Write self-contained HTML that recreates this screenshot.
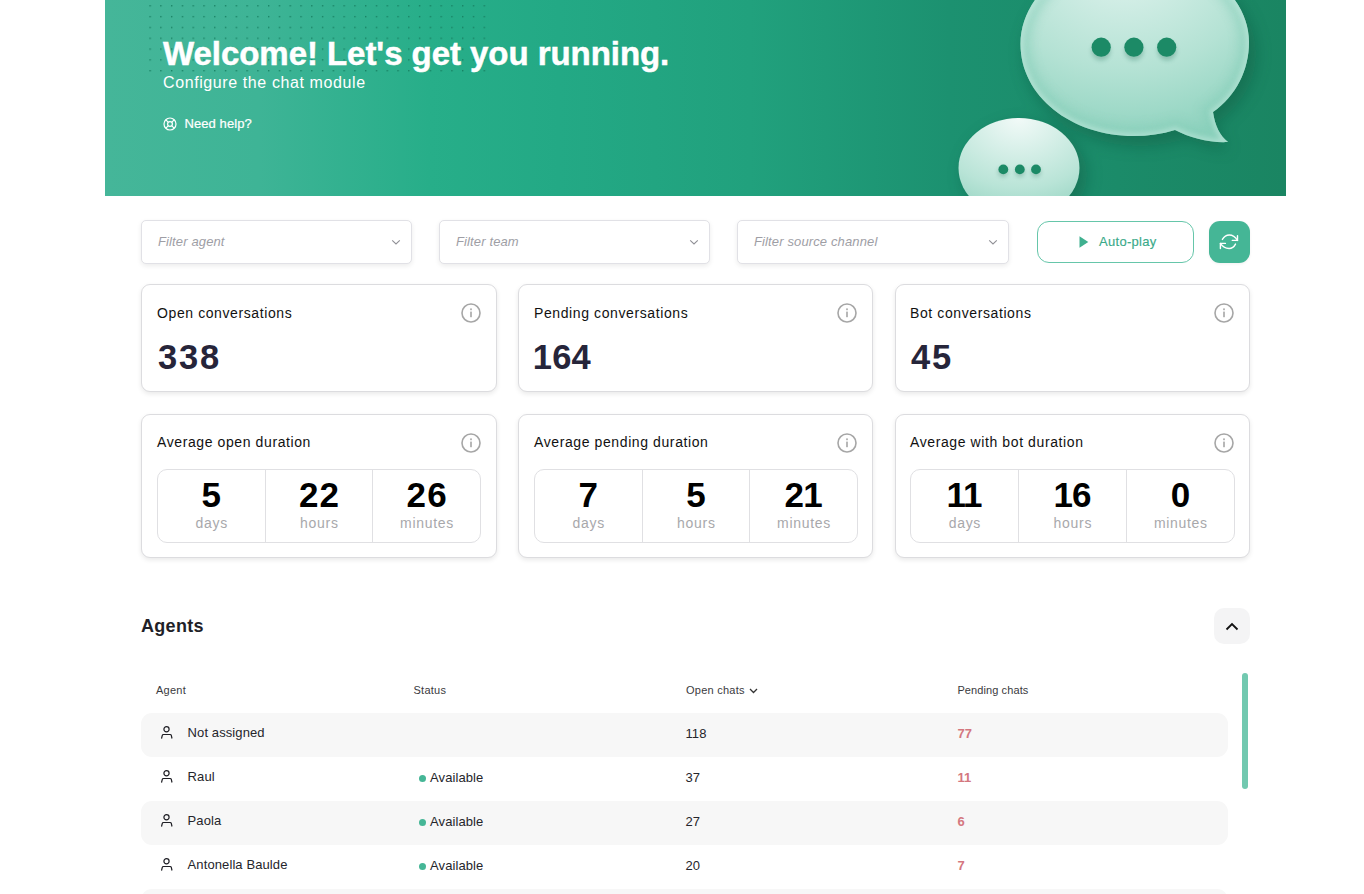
<!DOCTYPE html>
<html><head><meta charset="utf-8">
<style>
*{box-sizing:border-box;margin:0;padding:0}
html,body{width:1364px;height:894px;overflow:hidden;background:#fff;font-family:"Liberation Sans",sans-serif;color:#1f1f24}
.abs{position:absolute}
#banner{position:absolute;left:105px;top:0;width:1181px;height:196px;overflow:hidden;
 background:linear-gradient(90deg,#45b699 0%,#3eb496 13%,#27ae89 27.5%,#23a985 38.5%,#21a17d 54.6%,#1c9170 71.5%,#1a8562 100%)}
#dots{position:absolute;left:0;top:0}
.h1{position:absolute;left:163px;top:35px;font-size:33px;font-weight:bold;color:#fff;letter-spacing:-0.05px;-webkit-text-stroke:0.5px #fff;white-space:nowrap}
.sub{position:absolute;left:163px;top:74px;font-size:16px;color:#fff;letter-spacing:0.6px;white-space:nowrap}
.help{position:absolute;left:184.4px;top:116px;font-size:13px;color:#fff;white-space:nowrap;letter-spacing:0.1px;-webkit-text-stroke:0.2px #fff}
.filter{position:absolute;top:220px;height:44px;border:1px solid #e1e1e6;border-radius:5px;background:#fff;box-shadow:0 2px 5px rgba(0,0,0,.08)}
.filter span{position:absolute;left:16px;top:13px;font-size:13px;font-style:italic;color:#9e9ea5;letter-spacing:0.13px}
.filter svg{position:absolute;right:10px;top:18px}
.card{position:absolute;border:1px solid #dcdcdf;border-radius:9px;background:#fff;box-shadow:0 2px 5px rgba(0,0,0,.09)}
.card .t{position:absolute;top:20px;font-size:14px;color:#111;white-space:nowrap;letter-spacing:0.6px}
.card.r2 .t{top:19px}
.card .n{position:absolute;top:53px;font-size:34.5px;font-weight:bold;color:#26253a;letter-spacing:1.8px}
.card svg.info{position:absolute;right:15px;top:18px}
.dur{position:absolute;top:54px;height:74px;border:1px solid #e0e0e3;border-radius:10px;display:flex}
.dur div{flex:1;position:relative;text-align:center}
.dur div+div{border-left:1px solid #e0e0e3}
.dur b{position:absolute;left:0;right:0;top:5px;font-size:35px;color:#000;letter-spacing:1.2px;text-indent:1.2px}
.dur i{position:absolute;left:0;right:0;top:45px;font-style:normal;font-size:14px;color:#a8a8ab;letter-spacing:0.7px;text-indent:0.7px}
.th{position:absolute;top:683.7px;font-size:11px;color:#3a3a40;white-space:nowrap;letter-spacing:0.25px}
.row{position:absolute;left:141px;width:1087px;height:44px;border-radius:11px}
.cell{position:absolute;top:12px;font-size:13px;color:#25252b;white-space:nowrap;letter-spacing:0.1px}
.pend{font-weight:bold;color:#d4777f}
.dot{position:absolute;top:18px;width:7px;height:7px;border-radius:50%;background:#45b696}
</style></head><body>
<div id="banner"><svg id="dots" width="400" height="80" viewBox="0 0 400 80"><defs><pattern id="dp" x="44.4" y="5.1" width="10.78" height="10.82" patternUnits="userSpaceOnUse"><rect width="1.4" height="1.4" fill="#157e5f" opacity="0.9"/></pattern></defs><rect x="44" y="5" width="345" height="72" fill="url(#dp)"/></svg><svg class="abs" style="left:0;top:0" width="1181" height="196" viewBox="105 0 1181 196">
<defs>
<radialGradient id="g1" cx="0.45" cy="0.05" r="0.95"><stop offset="0" stop-color="#e0f3ee"/><stop offset="0.6" stop-color="#b4e2d4"/><stop offset="1" stop-color="#8fd3bf"/></radialGradient>
<radialGradient id="g2" cx="0.5" cy="0.0" r="1"><stop offset="0" stop-color="#f2faf8"/><stop offset="0.7" stop-color="#b9e4d7"/><stop offset="1" stop-color="#98d5c3"/></radialGradient>
<filter id="sh" x="-30%" y="-30%" width="160%" height="160%"><feGaussianBlur stdDeviation="8"/></filter>
<filter id="sh2" x="-50%" y="-50%" width="200%" height="200%"><feGaussianBlur stdDeviation="2"/></filter><filter id="bl5" x="-20%" y="-20%" width="140%" height="140%"><feGaussianBlur stdDeviation="5"/></filter><filter id="bl2" x="-20%" y="-20%" width="140%" height="140%"><feGaussianBlur stdDeviation="2.5"/></filter>
</defs>
<g opacity="0.35" filter="url(#sh)"><ellipse cx="1140" cy="54" rx="116" ry="92" fill="#0b4a36"/><path d="M1175 132 Q1200 146 1230 150 Q1212 130 1215 112Z" fill="#0b4a36"/><ellipse cx="1025" cy="175" rx="62" ry="52" fill="#0b4a36"/></g>
<clipPath id="cb"><path d="M1134.5 -47 C1198 -47 1249 -5 1249 42 C1249 70 1236 96 1213 112 C1215 126 1220 136 1228 142 C1210 143 1190 138 1175 130 C1162 134 1148 136 1134 136 C1071 136 1020.5 96 1020.5 44 C1020.5 -5 1071 -47 1134.5 -47Z"/></clipPath><clipPath id="cs"><ellipse cx="1019" cy="168" rx="60.5" ry="50"/></clipPath>
<path d="M1134.5 -47 C1198 -47 1249 -5 1249 42 C1249 70 1236 96 1213 112 C1215 126 1220 136 1228 142 C1210 143 1190 138 1175 130 C1162 134 1148 136 1134 136 C1071 136 1020.5 96 1020.5 44 C1020.5 -5 1071 -47 1134.5 -47Z" fill="url(#g1)"/>
<g clip-path="url(#cb)"><path d="M1134.5 -47 C1198 -47 1249 -5 1249 42 C1249 70 1236 96 1213 112 C1215 126 1220 136 1228 142 C1210 143 1190 138 1175 130 C1162 134 1148 136 1134 136 C1071 136 1020.5 96 1020.5 44 C1020.5 -5 1071 -47 1134.5 -47Z" fill="none" stroke="#84cdb7" stroke-width="22" opacity="0.45" filter="url(#bl5)"/><path d="M1134.5 -47 C1198 -47 1249 -5 1249 42 C1249 70 1236 96 1213 112 C1215 126 1220 136 1228 142 C1210 143 1190 138 1175 130 C1162 134 1148 136 1134 136 C1071 136 1020.5 96 1020.5 44 C1020.5 -5 1071 -47 1134.5 -47Z" fill="none" stroke="#cdeee4" stroke-width="6" opacity="0.5" filter="url(#bl2)"/></g>
<ellipse cx="1019" cy="168" rx="60.5" ry="50" fill="url(#g2)"/>
<g fill="#0f5a43" opacity="0.25" filter="url(#sh2)"><circle cx="1101" cy="51" r="9.6"/><circle cx="1134" cy="51" r="9.6"/><circle cx="1167" cy="51" r="9.6"/><circle cx="1003" cy="172" r="4.9"/><circle cx="1020" cy="172" r="4.9"/><circle cx="1036" cy="172" r="4.9"/></g>
<g fill="#1c8a66"><circle cx="1101.2" cy="47.2" r="9.6"/><circle cx="1133.9" cy="47.2" r="9.6"/><circle cx="1166.7" cy="47.2" r="9.6"/><circle cx="1003.3" cy="169.4" r="4.9"/><circle cx="1019.8" cy="169.4" r="4.9"/><circle cx="1036" cy="169.4" r="4.9"/></g>
</svg></div>
<div class="h1">Welcome! Let's get you running.</div>
<div class="sub">Configure the chat module</div>
<svg class="abs" style="left:163.4px;top:117.4px" width="14" height="14" viewBox="0 0 14 14"><g fill="none" stroke="#fff" stroke-width="1.2"><circle cx="7" cy="7" r="6"/><circle cx="7" cy="7" r="2.4"/><path d="M2.8 2.8 L5.2 5.2 M11.2 2.8 L8.8 5.2 M2.8 11.2 L5.2 8.8 M11.2 11.2 L8.8 8.8"/></g></svg>
<div class="help">Need help?</div>
<div class="filter" style="left:141px;width:271px"><span>Filter agent</span><svg width="10" height="6" viewBox="0 0 10 6"><path d="M1.2 1.3 L5 4.9 L8.8 1.3" fill="none" stroke="#909096" stroke-width="1.1"/></svg></div>
<div class="filter" style="left:439px;width:271px"><span>Filter team</span><svg width="10" height="6" viewBox="0 0 10 6"><path d="M1.2 1.3 L5 4.9 L8.8 1.3" fill="none" stroke="#909096" stroke-width="1.1"/></svg></div>
<div class="filter" style="left:737px;width:272px"><span>Filter source channel</span><svg width="10" height="6" viewBox="0 0 10 6"><path d="M1.2 1.3 L5 4.9 L8.8 1.3" fill="none" stroke="#909096" stroke-width="1.1"/></svg></div>
<div class="abs" style="left:1037px;top:221px;width:157px;height:42px;border:1px solid #66c6aa;border-radius:12px;"><svg class="abs" style="left:41px;top:14px" width="11" height="13" viewBox="0 0 11 13"><path d="M0.5 0.3 L9.3 6 L0.5 11.7Z" fill="#3fb08f"/></svg><span class="abs" style="left:61px;top:12px;font-size:13px;color:#3aaa89;letter-spacing:0.3px;-webkit-text-stroke:0.15px #3aaa89">Auto-play</span></div>
<div class="abs" style="left:1209px;top:221px;width:41px;height:42px;background:#45b696;border-radius:11px;box-shadow:0 1px 3px rgba(0,0,0,.06);"><svg class="abs" style="left:10px;top:11px" width="21" height="20" viewBox="0 0 21 20"><g fill="none" stroke="#fff" stroke-width="1.4" stroke-linecap="round" stroke-linejoin="round"><path d="M3.4 7.4 C5.5 3.8 8 3 10.3 3 C13.8 3 16.5 5.2 18.5 8.4"/><path d="M18.5 3.7 V8.4 H13.3"/><path d="M16.5 12.1 C15 15 12.8 16.5 10.1 16.5 C6.4 16.5 3.2 14.3 1.4 11.4"/><path d="M6.4 11.4 H1.4 V16.5"/></g></svg></div>
<div class="card" style="left:141px;top:284px;width:356px;height:108px"><div class="t" style="left:15px">Open conversations</div><div class="n" style="left:16px;">338</div><svg class="info" width="20" height="20" viewBox="0 0 20 20"><circle cx="10" cy="10" r="9" fill="none" stroke="#a6a6a6" stroke-width="1.6"/><rect x="9.2" y="8.6" width="1.6" height="5.6" fill="#a6a6a6"/><rect x="9.2" y="5.4" width="1.6" height="1.8" fill="#a6a6a6"/></svg></div>
<div class="card" style="left:518px;top:284px;width:355px;height:108px"><div class="t" style="left:15px">Pending conversations</div><div class="n" style="left:13.8px;letter-spacing:0.2px;">164</div><svg class="info" width="20" height="20" viewBox="0 0 20 20"><circle cx="10" cy="10" r="9" fill="none" stroke="#a6a6a6" stroke-width="1.6"/><rect x="9.2" y="8.6" width="1.6" height="5.6" fill="#a6a6a6"/><rect x="9.2" y="5.4" width="1.6" height="1.8" fill="#a6a6a6"/></svg></div>
<div class="card" style="left:895px;top:284px;width:355px;height:108px"><div class="t" style="left:14px">Bot conversations</div><div class="n" style="left:15px;">45</div><svg class="info" width="20" height="20" viewBox="0 0 20 20"><circle cx="10" cy="10" r="9" fill="none" stroke="#a6a6a6" stroke-width="1.6"/><rect x="9.2" y="8.6" width="1.6" height="5.6" fill="#a6a6a6"/><rect x="9.2" y="5.4" width="1.6" height="1.8" fill="#a6a6a6"/></svg></div>
<div class="card r2" style="left:141px;top:414px;width:356px;height:144px"><div class="t" style="left:15px">Average open duration</div><svg class="info" width="20" height="20" viewBox="0 0 20 20"><circle cx="10" cy="10" r="9" fill="none" stroke="#a6a6a6" stroke-width="1.6"/><rect x="9.2" y="8.6" width="1.6" height="5.6" fill="#a6a6a6"/><rect x="9.2" y="5.4" width="1.6" height="1.8" fill="#a6a6a6"/></svg><div class="dur" style="left:15px;width:324px"><div><b>5</b><i>days</i></div><div><b>22</b><i>hours</i></div><div><b>26</b><i>minutes</i></div></div></div>
<div class="card r2" style="left:518px;top:414px;width:355px;height:144px"><div class="t" style="left:15px">Average pending duration</div><svg class="info" width="20" height="20" viewBox="0 0 20 20"><circle cx="10" cy="10" r="9" fill="none" stroke="#a6a6a6" stroke-width="1.6"/><rect x="9.2" y="8.6" width="1.6" height="5.6" fill="#a6a6a6"/><rect x="9.2" y="5.4" width="1.6" height="1.8" fill="#a6a6a6"/></svg><div class="dur" style="left:15px;width:324px"><div><b>7</b><i>days</i></div><div><b>5</b><i>hours</i></div><div><b style="letter-spacing:-0.8px;text-indent:-0.8px">21</b><i>minutes</i></div></div></div>
<div class="card r2" style="left:895px;top:414px;width:355px;height:144px"><div class="t" style="left:14px">Average with bot duration</div><svg class="info" width="20" height="20" viewBox="0 0 20 20"><circle cx="10" cy="10" r="9" fill="none" stroke="#a6a6a6" stroke-width="1.6"/><rect x="9.2" y="8.6" width="1.6" height="5.6" fill="#a6a6a6"/><rect x="9.2" y="5.4" width="1.6" height="1.8" fill="#a6a6a6"/></svg><div class="dur" style="left:14px;width:325px"><div><b style="letter-spacing:-0.8px;text-indent:-0.8px">11</b><i>days</i></div><div><b style="letter-spacing:-0.8px;text-indent:-0.8px">16</b><i>hours</i></div><div><b>0</b><i>minutes</i></div></div></div>
<div class="abs" style="left:141px;top:616px;font-size:18px;font-weight:bold;color:#1f1f28;letter-spacing:0.3px">Agents</div>
<div class="abs" style="left:1214px;top:608px;width:36px;height:36px;border-radius:10px;background:#f4f4f5"><svg class="abs" style="left:11px;top:14px" width="14" height="9" viewBox="0 0 14 9"><path d="M1.5 7.5 L7 2 L12.5 7.5" fill="none" stroke="#111" stroke-width="1.8"/></svg></div>
<div class="th" style="left:156px">Agent</div><div class="th" style="left:413.5px">Status</div><div class="th" style="left:686px">Open chats<svg style="position:absolute;left:63.2px;top:4px" width="9" height="6" viewBox="0 0 9 6"><path d="M1 1 L4.5 4.5 L8 1" fill="none" stroke="#333" stroke-width="1.3"/></svg></div><div class="th" style="left:957.4px;letter-spacing:0.1px">Pending chats</div>
<div class="row" style="top:713px;background:#f7f7f7;"><svg class="abs" style="left:20px;top:13px" width="13" height="14" viewBox="0 0 13 14"><g fill="none" stroke="#1e1e24" stroke-width="1.2" stroke-linejoin="round"><circle cx="5.5" cy="3.2" r="2.6"/><path d="M0.5 12.5 L1.3 9.3 Q1.5 8.5 2.4 8.5 H9.2 Q10.1 8.5 10.3 9.3 L11 12.5"/></g></svg><span class="cell" style="left:46.6px">Not assigned</span><span class="cell" style="left:544.5px;top:13px">118</span><span class="cell pend" style="left:816.5px;top:13px">77</span></div>
<div class="row" style="top:757px;"><svg class="abs" style="left:20px;top:13px" width="13" height="14" viewBox="0 0 13 14"><g fill="none" stroke="#1e1e24" stroke-width="1.2" stroke-linejoin="round"><circle cx="5.5" cy="3.2" r="2.6"/><path d="M0.5 12.5 L1.3 9.3 Q1.5 8.5 2.4 8.5 H9.2 Q10.1 8.5 10.3 9.3 L11 12.5"/></g></svg><span class="cell" style="left:46.6px">Raul</span><span class="dot" style="left:277.7px"></span><span class="cell" style="left:289px;top:13px">Available</span><span class="cell" style="left:544.5px;top:13px">37</span><span class="cell pend" style="left:816.5px;top:13px">11</span></div>
<div class="row" style="top:801px;background:#f7f7f7;"><svg class="abs" style="left:20px;top:13px" width="13" height="14" viewBox="0 0 13 14"><g fill="none" stroke="#1e1e24" stroke-width="1.2" stroke-linejoin="round"><circle cx="5.5" cy="3.2" r="2.6"/><path d="M0.5 12.5 L1.3 9.3 Q1.5 8.5 2.4 8.5 H9.2 Q10.1 8.5 10.3 9.3 L11 12.5"/></g></svg><span class="cell" style="left:46.6px">Paola</span><span class="dot" style="left:277.7px"></span><span class="cell" style="left:289px;top:13px">Available</span><span class="cell" style="left:544.5px;top:13px">27</span><span class="cell pend" style="left:816.5px;top:13px">6</span></div>
<div class="row" style="top:845px;"><svg class="abs" style="left:20px;top:13px" width="13" height="14" viewBox="0 0 13 14"><g fill="none" stroke="#1e1e24" stroke-width="1.2" stroke-linejoin="round"><circle cx="5.5" cy="3.2" r="2.6"/><path d="M0.5 12.5 L1.3 9.3 Q1.5 8.5 2.4 8.5 H9.2 Q10.1 8.5 10.3 9.3 L11 12.5"/></g></svg><span class="cell" style="left:46.6px">Antonella Baulde</span><span class="dot" style="left:277.7px"></span><span class="cell" style="left:289px;top:13px">Available</span><span class="cell" style="left:544.5px;top:13px">20</span><span class="cell pend" style="left:816.5px;top:13px">7</span></div>
<div class="row" style="top:889px;background:#f7f7f7;"></div>
<div class="abs" style="left:1242px;top:673px;width:6px;height:116px;border-radius:3px;background:#72c9b0"></div>
</body></html>
